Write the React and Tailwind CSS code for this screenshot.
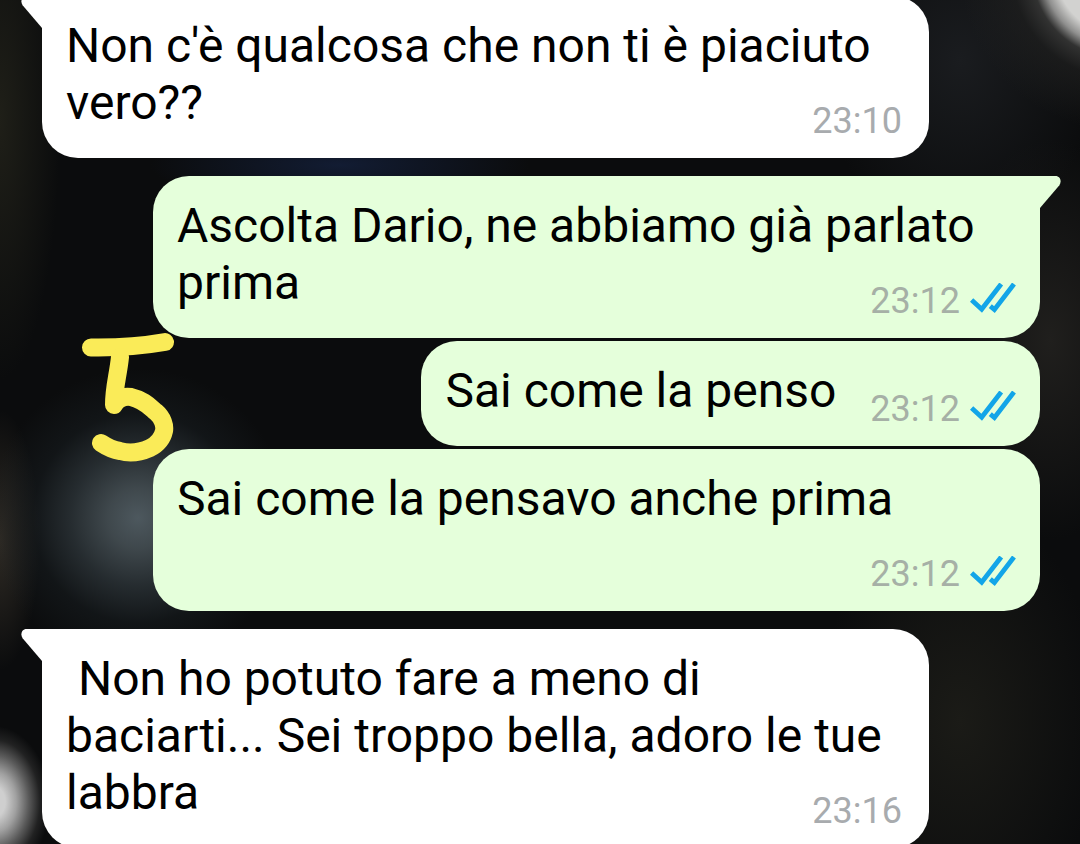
import clsx from 'clsx';

const messages = [
  { id: 1, mine: false, tail: true, time: '23:10', text: "Non c'è qualcosa che non ti è piaciuto vero??" },
  { id: 2, mine: true, tail: true, time: '23:12', text: 'Ascolta Dario, ne abbiamo già parlato prima' },
  { id: 3, mine: true, tail: false, time: '23:12', text: 'Sai come la penso' },
  { id: 4, mine: true, tail: false, time: '23:12', text: 'Sai come la pensavo anche prima' },
  { id: 5, mine: false, tail: true, time: '23:16', text: ' Non ho potuto fare a meno di baciarti... Sei troppo bella, adoro le tue labbra' },
];

function Tail({ mine }) {
  return (
    <svg
      viewBox="0 0 22 33"
      className={clsx(
        'absolute top-0 h-[33px] w-[22px]',
        mine ? '-right-[21px] -scale-x-100 text-[#e5ffdb]' : '-left-[21px] text-white'
      )}
      fill="currentColor"
      aria-hidden="true"
    >
      <path d="M22 0H5.5C0.8 0-1 5.2 1.6 9.2L21 32H22Z" />
    </svg>
  );
}

function ReadTicks() {
  return (
    <svg
      viewBox="0 0 46 36"
      className="h-9 w-[46px] text-[#12a5e8]"
      fill="none"
      stroke="currentColor"
      strokeWidth="4.8"
      role="img"
      aria-label="Letto"
    >
      <path d="M1.6 17L11.7 26.3L31.2 1" />
      <path d="M20.3 23.2L24.4 26.6L44 1" />
    </svg>
  );
}

function Message({ message }) {
  const { mine, tail, time, text } = message;

  return (
    <li
      className={clsx(
        'relative flow-root w-fit max-w-[887px] rounded-[36px] px-6 pt-[21px] pb-[13px]',
        mine ? 'self-end bg-[#e5ffdb]' : 'self-start bg-white',
        tail && (mine ? 'rounded-tr-none' : 'rounded-tl-none'),
        tail ? 'mt-[18px] first:-mt-1' : 'mt-[3px]'
      )}
    >
      {tail && <Tail mine={mine} />}
      <p className="text-[48px] leading-[57px] whitespace-pre-wrap text-black">
        {text}
        <span
          className={clsx(
            'float-right mt-[23px] ml-[34px] flex h-12 items-center gap-[10px] text-[36px] leading-[48px]',
            mine ? 'text-[#a6b0a6]' : 'pr-[3px] text-[#a8abae]'
          )}
        >
          <time>{time}</time>
          {mine && <ReadTicks />}
        </span>
      </p>
    </li>
  );
}

function DrawnFive() {
  return (
    <svg
      viewBox="0 0 96 132"
      className="absolute top-[332px] left-20 h-[132px] w-24 text-[#faeb58]"
      fill="none"
      stroke="currentColor"
      strokeWidth="18"
      strokeLinecap="round"
      strokeLinejoin="round"
      role="img"
      aria-label="5"
    >
      <path d="M11 15.5C40 16 62 14 85 10" />
      <path d="M40 25C38 44 34 55 34 73C38 66 44 64 51 65C64 68 70 75 76 80C83 86 85 94 84 99C82 108 76 113 70 116C61 120 50 122 40 119C33 118 27 115 21 111" />
    </svg>
  );
}

// Out-of-focus wallpaper: light spots in two corners, a grey-blue haze and faint tints on near black
const wallpaper = clsx(
  'bg-[#0b0c0d]',
  'bg-[radial-gradient(circle_at_1120px_-30px,#d2d2d0_64px,#8f8f8e_77px,#3a3a39cc_88px,#24242388_108px,transparent_160px),radial-gradient(ellipse_56px_76px_at_-6px_802px,#cfcfcf_20%,#a0a0a0_40%,#5a5a5a_62%,#2c2c2caa_82%,transparent),radial-gradient(ellipse_150px_150px_at_138px_518px,#4d585e,#475156dd_20%,#333c41aa_45%,#1c232766_70%,transparent),radial-gradient(ellipse_40px_130px_at_0px_540px,#2e2a24,transparent),radial-gradient(ellipse_190px_40px_at_340px_165px,#121c33,transparent),radial-gradient(ellipse_60px_260px_at_0px_120px,#1f1f18,transparent),radial-gradient(ellipse_140px_180px_at_960px_60px,#1a1c1f,transparent),radial-gradient(ellipse_110px_200px_at_1050px_340px,#201f1d,transparent),radial-gradient(ellipse_140px_220px_at_960px_720px,#1b1b17,transparent)]'
);

export default function App() {
  return (
    <main className={clsx("relative h-screen overflow-hidden font-['Roboto',sans-serif]", wallpaper)}>
      <ul className="flex flex-col pr-10 pl-[42px]">
        {messages.map((message) => (
          <Message key={message.id} message={message} />
        ))}
      </ul>
      <DrawnFive />
    </main>
  );
}
